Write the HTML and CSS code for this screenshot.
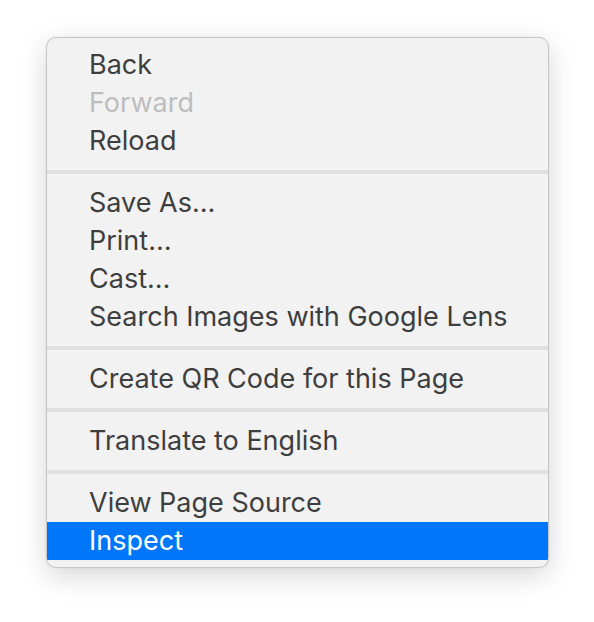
FILE: index.html
```html
<!DOCTYPE html>
<html lang="en">
<head>
<meta charset="utf-8">
<title>Context menu</title>
<link rel="stylesheet" href="styles.css">
</head>
<body>
<div class="menu">
  <div class="item">Back</div>
  <div class="item disabled">Forward</div>
  <div class="item">Reload</div>
  <div class="sep"></div>
  <div class="item">Save As…</div>
  <div class="item">Print…</div>
  <div class="item">Cast…</div>
  <div class="item">Search Images with Google Lens</div>
  <div class="sep"></div>
  <div class="item">Create QR Code for this Page</div>
  <div class="sep"></div>
  <div class="item">Translate to English</div>
  <div class="sep"></div>
  <div class="item">View Page Source</div>
  <div class="item active">Inspect</div>
</div>
</body>
</html>
```
FILE: styles.css
```css
html, body {
  margin: 0;
  padding: 0;
  background: #ffffff;
  width: 594px;
  height: 622px;
  overflow: hidden;
}
body {
  padding-top: 37px;
  padding-left: 46px;
  box-sizing: border-box;
  font-family: Inter, "Liberation Sans", sans-serif;
}
.menu {
  width: 503px;
  box-sizing: border-box;
  background: #f2f2f2;
  border: 1px solid #c6c6c6;
  border-radius: 10px;
  padding: 8px 0 7px;
  box-shadow: 0 8px 28px rgba(0, 0, 0, 0.16), 0 0 2px rgba(0, 0, 0, 0.08);
  overflow: hidden;
}
.item {
  height: 38px;
  line-height: 38px;
  padding-left: 42px;
  font-size: 27px;
  color: #3e3e3e;
  white-space: nowrap;
}
.item.disabled {
  color: #bdbdbd;
}
.item.active {
  background: #0077fa;
  color: #ffffff;
}
.sep {
  height: 4px;
  margin: 10px 0;
  background: #e1e1e1;
}
```
